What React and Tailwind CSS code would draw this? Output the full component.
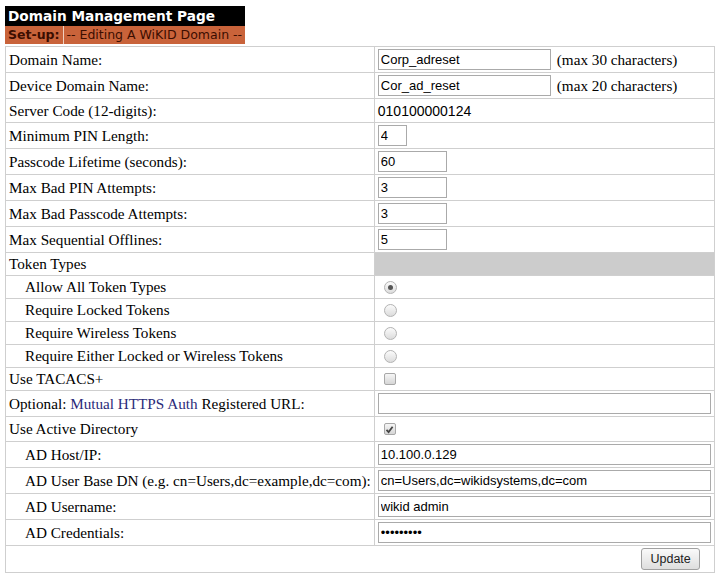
import React from "react";

const serif = { fontFamily: '"Liberation Serif", "Times New Roman", serif' };
const sans = { fontFamily: '"Liberation Sans", Arial, sans-serif' };

const Radio = ({ checked }) => (
  <span className="inline-flex h-[13px] w-[13px] items-center justify-center rounded-full border border-[#b4b4b4] bg-gradient-to-b from-[#fbfbfb] to-[#dcdcdc]">
    {checked && <span className="h-[5px] w-[5px] rounded-full bg-[#555]" />}
  </span>
);

const Checkbox = ({ checked }) => (
  <span className="inline-flex h-[12px] w-[12px] items-center justify-center rounded-[2px] border border-[#a8a8a8] bg-gradient-to-b from-[#f6f6f6] to-[#d6d6d6]">
    {checked && (
      <svg width="9" height="9" viewBox="0 0 9 9">
        <path d="M1.5 4.8 L3.6 7 L7.6 1.8" fill="none" stroke="#444" strokeWidth="1.8" />
      </svg>
    )}
  </span>
);

const Input = ({ value, w, type = "text" }) => (
  <input
    type={type}
    readOnly
    value={value}
    className={`block h-[21px] border border-[#aaa] bg-white px-[2px] text-[13px] text-black outline-none ${w}`}
    style={sans}
  />
);

const td = "border border-[#cfcfcf] px-[3px] py-[2px] align-middle whitespace-nowrap";

const Row = ({ label, indent, children, gray, h = "" }) => (
  <tr className={h}>
    <td className={`${td} ${indent ? "pl-[19px]" : ""}`}>{label}</td>
    <td className={`${td} ${gray ? "bg-[#cccccc]" : ""}`}>{children}</td>
  </tr>
);

export default function App() {
  return (
    <div className="min-h-screen bg-white pl-[5px] pt-[6px] text-[15.2px] leading-[18px] text-black" style={serif}>
      <table className="border-collapse whitespace-nowrap" style={{ fontFamily: '"DejaVu Sans", Verdana, sans-serif' }}>
        <tbody>
          <tr>
            <td colSpan={2} className="h-[20px] bg-black px-[3px] text-[13.7px] font-bold leading-[20px] text-white">
              Domain Management Page
            </td>
          </tr>
          <tr className="bg-[#c9633a] text-[12.5px] leading-[18px] text-[#3b0d00]">
            <td className="border-r border-[#f0d0c0] px-[3px] font-bold">Set-up:</td>
            <td className="px-[3px]">-- Editing A WiKID Domain --</td>
          </tr>
        </tbody>
      </table>

      <table className="mt-[2px] w-[709px] border-collapse border border-[#cfcfcf]">
        <colgroup>
          <col className="w-[371px]" />
          <col />
        </colgroup>
        <tbody>
          <Row label="Domain Name:">
            <div className="flex items-center gap-[6px]">
              <Input value="Corp_adreset" w="w-[173px]" />
              <span>(max 30 characters)</span>
            </div>
          </Row>
          <Row label="Device Domain Name:">
            <div className="flex items-center gap-[6px]">
              <Input value="Cor_ad_reset" w="w-[173px]" />
              <span>(max 20 characters)</span>
            </div>
          </Row>
          <Row label="Server Code (12-digits):" h="h-[24px]">
            <span className="text-[14px]" style={sans}>
              010100000124
            </span>
          </Row>
          <Row label="Minimum PIN Length:">
            <Input value="4" w="w-[29px]" />
          </Row>
          <Row label="Passcode Lifetime (seconds):">
            <Input value="60" w="w-[69px]" />
          </Row>
          <Row label="Max Bad PIN Attempts:">
            <Input value="3" w="w-[69px]" />
          </Row>
          <Row label="Max Bad Passcode Attempts:">
            <Input value="3" w="w-[69px]" />
          </Row>
          <Row label="Max Sequential Offlines:">
            <Input value="5" w="w-[69px]" />
          </Row>
          <Row label="Token Types" gray>
            <span>&nbsp;</span>
          </Row>
          <Row label="Allow All Token Types" indent>
            <span className="flex pl-[6px]"><Radio checked /></span>
          </Row>
          <Row label="Require Locked Tokens" indent>
            <span className="flex pl-[6px]"><Radio /></span>
          </Row>
          <Row label="Require Wireless Tokens" indent>
            <span className="flex pl-[6px]"><Radio /></span>
          </Row>
          <Row label="Require Either Locked or Wireless Tokens" indent>
            <span className="flex pl-[6px]"><Radio /></span>
          </Row>
          <Row label="Use TACACS+">
            <span className="flex pl-[6px]"><Checkbox /></span>
          </Row>
          <Row
            label={
              <span>
                Optional: <span className="text-[#2b2b7a]">Mutual HTTPS Auth</span> Registered URL:
              </span>
            }
          >
            <Input value="" w="w-[333px]" />
          </Row>
          <Row label="Use Active Directory" h="h-[25px]">
            <span className="flex pl-[6px]"><Checkbox checked /></span>
          </Row>
          <Row label="AD Host/IP:" indent>
            <Input value="10.100.0.129" w="w-[333px]" />
          </Row>
          <Row label="AD User Base DN (e.g. cn=Users,dc=example,dc=com):" indent>
            <Input value="cn=Users,dc=wikidsystems,dc=com" w="w-[333px]" />
          </Row>
          <Row label="AD Username:" indent>
            <Input value="wikid admin" w="w-[333px]" />
          </Row>
          <Row label="AD Credentials:" indent>
            <Input value="wikidpass" type="password" w="w-[333px]" />
          </Row>
          <tr>
            <td colSpan={2} className="border border-[#cfcfcf] px-[3px] py-[2px] text-right">
              <button
                className="mr-[11px] h-[22px] rounded-[3px] border border-[#a0a0a0] bg-gradient-to-b from-[#fafafa] to-[#dedede] px-[8px] text-[12.5px] leading-[20px] text-[#222]"
                style={sans}
              >
                Update
              </button>
            </td>
          </tr>
        </tbody>
      </table>
    </div>
  );
}
